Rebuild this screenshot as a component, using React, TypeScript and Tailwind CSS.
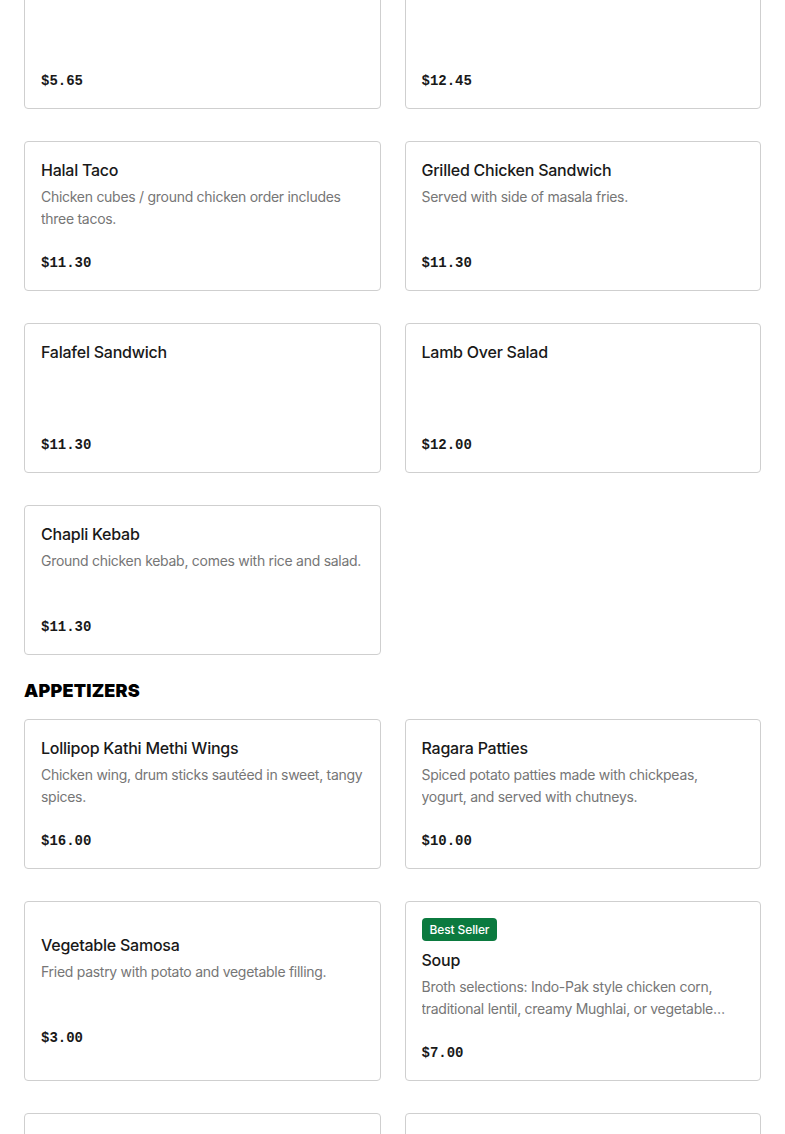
import React from 'react';

type Item = {
  name: string;
  desc?: string;
  price: string;
  badge?: string;
};

const mains: Item[] = [
  { name: 'Chicken Biryani', price: '$5.65' },
  { name: 'Chicken Over Rice', price: '$12.45' },
  { name: 'Halal Taco', desc: 'Chicken cubes / ground chicken order includes three tacos.', price: '$11.30' },
  { name: 'Grilled Chicken Sandwich', desc: 'Served with side of masala fries.', price: '$11.30' },
  { name: 'Falafel Sandwich', price: '$11.30' },
  { name: 'Lamb Over Salad', price: '$12.00' },
  { name: 'Chapli Kebab', desc: 'Ground chicken kebab, comes with rice and salad.', price: '$11.30' },
];

const appetizers: Item[] = [
  { name: 'Lollipop Kathi Methi Wings', desc: 'Chicken wing, drum sticks sautéed in sweet, tangy spices.', price: '$16.00' },
  { name: 'Ragara Patties', desc: 'Spiced potato patties made with chickpeas, yogurt, and served with chutneys.', price: '$10.00' },
  { name: 'Vegetable Samosa', desc: 'Fried pastry with potato and vegetable filling.', price: '$3.00' },
  {
    name: 'Soup',
    badge: 'Best Seller',
    desc: 'Broth selections: Indo-Pak style chicken corn, traditional lentil, creamy Mughlai, or vegetable soup with fresh herbs.',
    price: '$7.00',
  },
  { name: 'Chicken Pakora', desc: 'Crispy fried chicken fritters.', price: '$8.00' },
  { name: 'Fries', desc: 'Seasoned with masala spices.', price: '$5.00' },
];

const MenuCard = ({ item }: { item: Item }) => (
  <div className="flex min-h-[150px] flex-col justify-center rounded border border-[#cfcfcf] bg-white px-4 pt-4 pb-[15px]">
    {item.badge && (
      <div className="mb-[7px] h-[23px] self-start rounded-[4px] bg-[#0b7a3f] px-2 text-[12px] font-medium leading-[23px] tracking-[-0.01em] text-white">
        {item.badge}
      </div>
    )}
    <div className="text-[16px] font-medium leading-6 tracking-[-0.015em] text-[#191919]">{item.name}</div>
    <div className="mt-1 h-[44px] overflow-hidden text-[14px] leading-[22px] tracking-[-0.02em] text-[#767676] line-clamp-2">
      {item.desc}
    </div>
    <div className="mt-5 pt-[1px] font-['Liberation_Mono',monospace] text-[14px] font-bold leading-6 text-[#191919]">
      {item.price}
    </div>
  </div>
);

export default function App() {
  return (
    <div className="h-[1134px] overflow-hidden bg-white font-['Inter',sans-serif] antialiased">
      <div className="-mt-[41px] px-6">
        <div className="grid grid-cols-2 gap-x-6 gap-y-8">
          {mains.map((item) => (
            <MenuCard key={item.name} item={item} />
          ))}
        </div>

        <h2 className="mt-6 mb-4 text-[18px] font-black uppercase leading-6 tracking-[0.01em] text-black">
          Appetizers
        </h2>

        <div className="grid grid-cols-2 gap-x-6 gap-y-8">
          {appetizers.map((item) => (
            <MenuCard key={item.name} item={item} />
          ))}
        </div>
      </div>
    </div>
  );
}
